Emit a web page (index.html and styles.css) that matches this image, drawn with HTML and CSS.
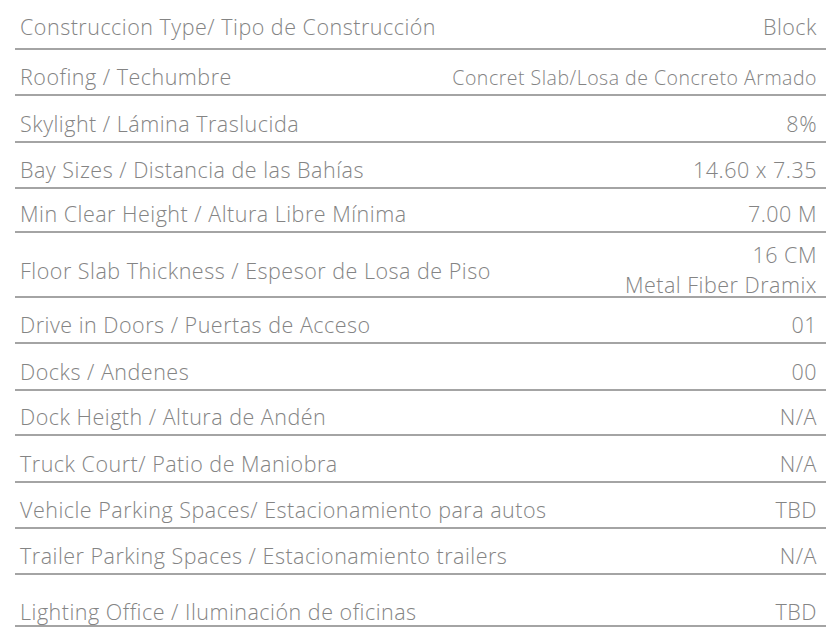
FILE: index.html
```html
<!DOCTYPE html>
<html lang="es">
<head>
<meta charset="utf-8">
<title>Especificaciones</title>
<link rel="stylesheet" href="styles.css">
</head>
<body>
<div class="specs">
  <div class="row row-first"><span class="label">Construccion Type/ Tipo de Construcción</span><span class="value">Block</span></div>
  <div class="row"><span class="label">Roofing / Techumbre</span><span class="value value-small">Concret Slab/Losa de Concreto Armado</span></div>
  <div class="row row-47"><span class="label">Skylight / Lámina Traslucida</span><span class="value">8%</span></div>
  <div class="row"><span class="label">Bay Sizes / Distancia de las Bahías</span><span class="value">14.60 x 7.35</span></div>
  <div class="row row-44"><span class="label">Min Clear Height / Altura Libre Mínima</span><span class="value">7.00 M</span></div>
  <div class="row row-tall"><span class="label label-mid">Floor Slab Thickness / Espesor de Losa de Piso</span><span class="value value-stack">16 CM<br>Metal Fiber Dramix</span></div>
  <div class="row"><span class="label">Drive in Doors / Puertas de Acceso</span><span class="value">01</span></div>
  <div class="row row-47"><span class="label">Docks / Andenes</span><span class="value">00</span></div>
  <div class="row row-45"><span class="label">Dock Heigth / Altura de Andén</span><span class="value">N/A</span></div>
  <div class="row row-47"><span class="label">Truck Court/ Patio de Maniobra</span><span class="value">N/A</span></div>
  <div class="row"><span class="label">Vehicle Parking Spaces/ Estacionamiento para autos</span><span class="value">TBD</span></div>
  <div class="row"><span class="label">Trailer Parking Spaces / Estacionamiento trailers</span><span class="value">N/A</span></div>
  <div class="row row-last"><span class="label">Lighting Office / Iluminación de oficinas</span><span class="value">TBD</span></div>
</div>
</body>
</html>
```
FILE: styles.css
```css
html, body {
  margin: 0;
  padding: 0;
  background: #ffffff;
}

.specs {
  width: 811px;
  margin-left: 15px;
  font-family: "Open Sans", "Liberation Sans", sans-serif;
  font-size: 21.5px;
  font-weight: 300;
  letter-spacing: 0.5px;
  color: #848484;
}

.row {
  display: flex;
  justify-content: space-between;
  align-items: flex-end;
  box-sizing: border-box;
  height: 46px;
  padding: 0 9px 7px 5px;
  border-bottom: 2px solid #a4a4a4;
  line-height: 1;
  white-space: nowrap;
}

.row-first { height: 50px; padding-bottom: 11px; }
.row-47 { height: 47px; }
.row-45 { height: 45px; }
.row-44 { height: 44px; }
.row-last { height: 52px; padding-bottom: 3px; }

.row-tall {
  height: 65px;
  padding-bottom: 0;
}

.label-mid {
  align-self: flex-end;
  padding-bottom: 15px;
}

.value-small {
  font-size: 19.5px;
}

.value-stack {
  text-align: right;
  line-height: 30px;
  margin-bottom: -4px;
}
```
